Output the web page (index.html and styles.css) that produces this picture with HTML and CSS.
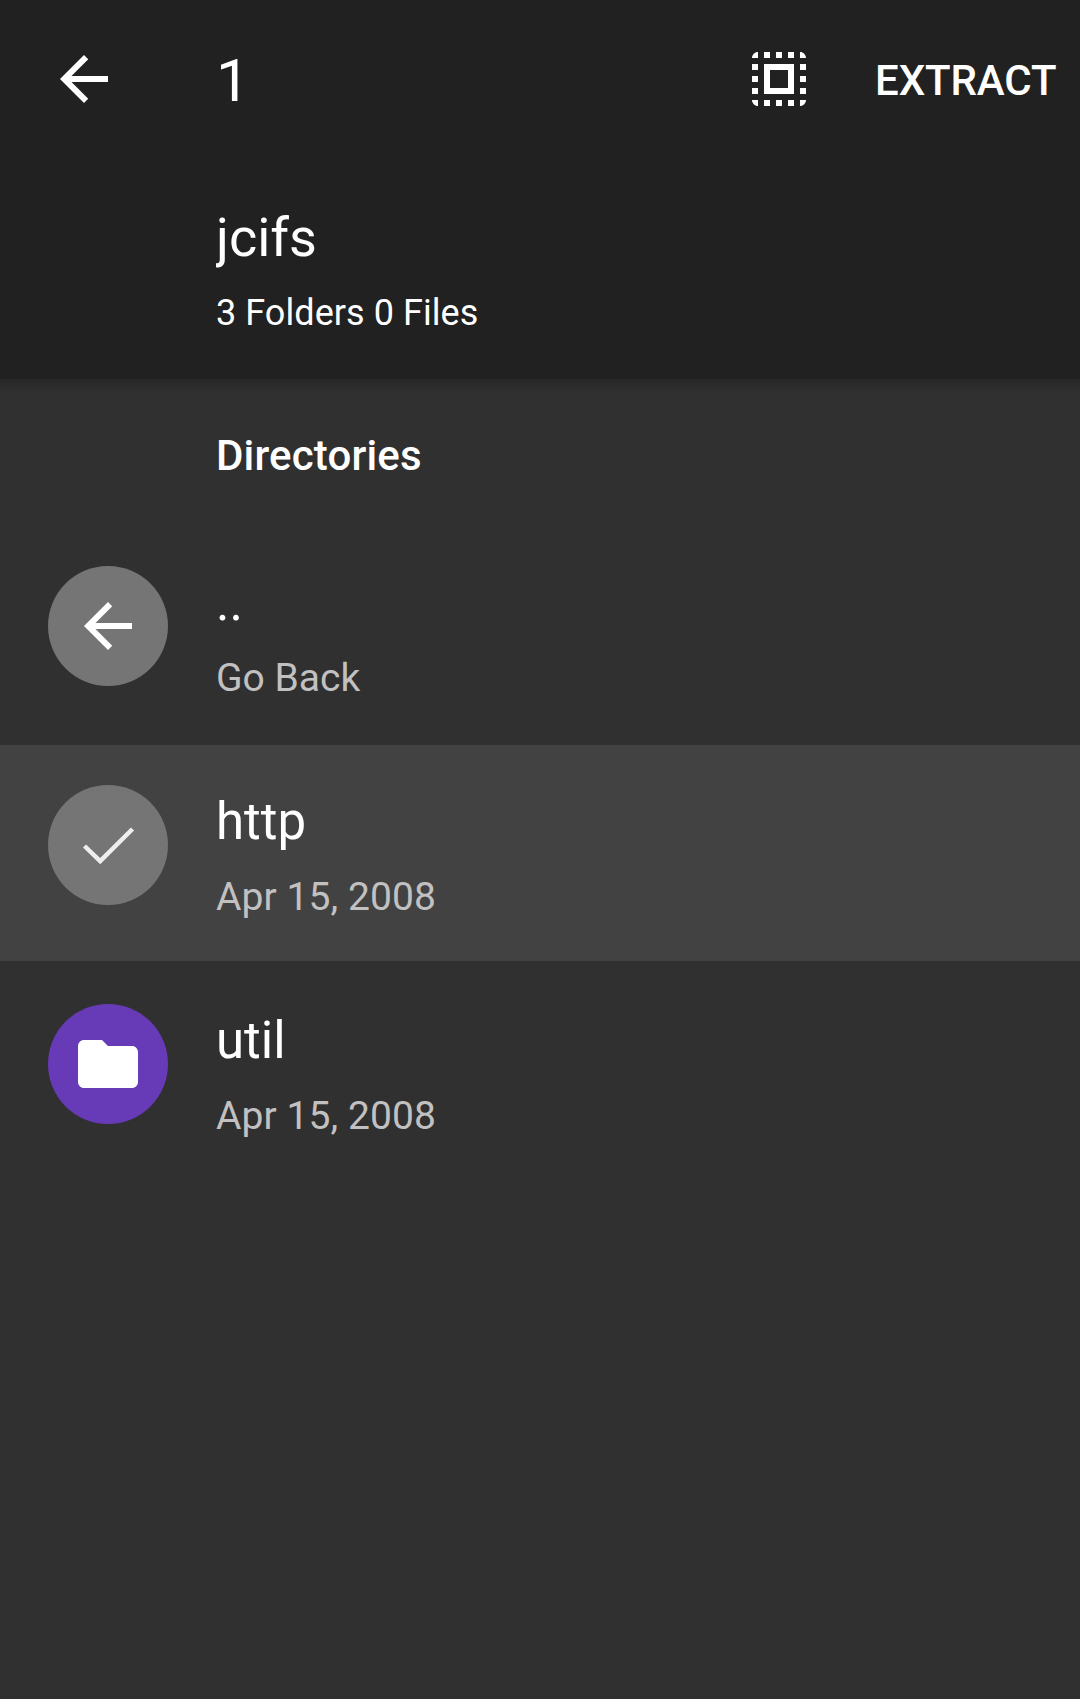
FILE: index.html
```html
<!DOCTYPE html>
<html lang="en">
<head>
<meta charset="utf-8">
<title>jcifs</title>
<link rel="stylesheet" href="styles.css">
</head>
<body>
<header class="header">
  <div class="toolbar">
    <svg class="icon back" viewBox="0 0 24 24"><path d="M20 11H7.83l5.59-5.59L12 4l-8 8 8 8 1.41-1.41L7.83 13H20v-2z"/></svg>
    <span class="count">1</span>
    <svg class="icon select-all" viewBox="0 0 24 24"><path d="M3 5h2V3c-1.100 0-2 .9-2 2zm0 8h2v-2H3v2zm4 8h2v-2H7v2zM3 9h2V7H3v2zm10-6h-2v2h2V3zm6 0v2h2c0-1.100-.9-2-2-2zM5 21v-2H3c0 1.100.9 2 2 2zm-2-4h2v-2H3v2zM9 3H7v2h2V3zm2 18h2v-2h-2v2zm8-8h2v-2h-2v2zm0 8c1.100 0 2-.9 2-2h-2v2zm0-12h2V7h-2v2zm0 8h2v-2h-2v2zm-4 4h2v-2h-2v2zm0-16h2V3h-2v2zM7 17h10V7H7v10zm2-8h6v6H9V9z"/></svg>
    <span class="action">EXTRACT</span>
  </div>
  <div class="summary">
    <div class="path">jcifs</div>
    <div class="totals">3 Folders 0 Files</div>
  </div>
</header>
<main>
  <h2 class="section">Directories</h2>
  <ul class="list">
    <li class="row">
      <span class="badge"><svg class="icon" viewBox="0 0 24 24"><path d="M20 11H7.83l5.59-5.59L12 4l-8 8 8 8 1.41-1.41L7.83 13H20v-2z"/></svg></span>
      <div class="text"><div class="name">..</div><div class="meta">Go Back</div></div>
    </li>
    <li class="row selected">
      <span class="badge"><svg class="icon check" viewBox="0 0 72 72"><path d="M12.500 37L28.200 52.200L60.500 20"/></svg></span>
      <div class="text"><div class="name">http</div><div class="meta date">Apr 15, 2008</div></div>
    </li>
    <li class="row">
      <span class="badge folder"><svg class="icon" viewBox="0 0 24 24"><path d="M10 4H4c-1.100 0-1.990.9-1.990 2L2 18c0 1.100.9 2 2 2h16c1.100 0 2-.9 2-2V8c0-1.100-.9-2-2-2h-8l-2-2z"/></svg></span>
      <div class="text"><div class="name">util</div><div class="meta date">Apr 15, 2008</div></div>
    </li>
  </ul>
</main>
</body>
</html>
```
FILE: styles.css
```css
* { box-sizing: border-box; }

body {
  margin: 0;
  min-height: 1699px;
  background: #303030;
  color: #fff;
  font-family: Roboto, sans-serif;
}

.header {
  height: 379px;
  background: #212121;
}

.toolbar {
  display: flex;
  align-items: center;
  height: 158px;
  padding: 0 24px 0 48px;
}

.icon {
  display: block;
  flex: none;
  width: 72px;
  height: 72px;
  fill: #fff;
}

.count {
  margin-left: 96px;
  padding-top: 3px;
  font-size: 60px;
  line-height: 70px;
}

.select-all { margin-left: auto; }

.action {
  width: 181px;
  margin-left: 60px;
  padding-top: 3px;
  font-size: 42px;
  font-weight: 500;
  line-height: 50px;
  letter-spacing: -0.1px;
}

.summary { padding: 48px 0 0 216px; }

.path {
  overflow: hidden;
  font-size: 54px;
  line-height: 64px;
}

.totals {
  margin-top: 22px;
  font-size: 36px;
  line-height: 42px;
  letter-spacing: 0.06px;
}

main {
  background: linear-gradient(#282828, #303030 15px);
}

.section {
  margin: 0;
  padding: 52px 0 61px 216px;
  font-size: 42px;
  font-weight: 500;
  line-height: 50px;
  letter-spacing: 0.15px;
}

.list {
  display: flex;
  flex-direction: column;
  gap: 3px;
  margin: 0;
  padding: 0;
  list-style: none;
}

.row {
  display: flex;
  align-items: flex-start;
  gap: 48px;
  height: 216px;
  padding: 40px 48px;
}

.row:first-child {
  height: 200px;
  padding-top: 24px;
}

.selected { background: #424242; }

.badge {
  display: flex;
  align-items: center;
  justify-content: center;
  flex: none;
  width: 120px;
  height: 120px;
  border-radius: 50%;
  background: #757575;
}

.folder { background: #673ab7; }

.check {
  fill: none;
  stroke: #eee;
  stroke-width: 4.5;
}

.text { padding-top: 7px; }

.name {
  font-size: 51px;
  line-height: 60px;
}

.meta {
  margin-top: 22px;
  color: #c1c1c1;
  font-size: 39px;
  line-height: 46px;
}

.date { letter-spacing: 0.08px; }
```
